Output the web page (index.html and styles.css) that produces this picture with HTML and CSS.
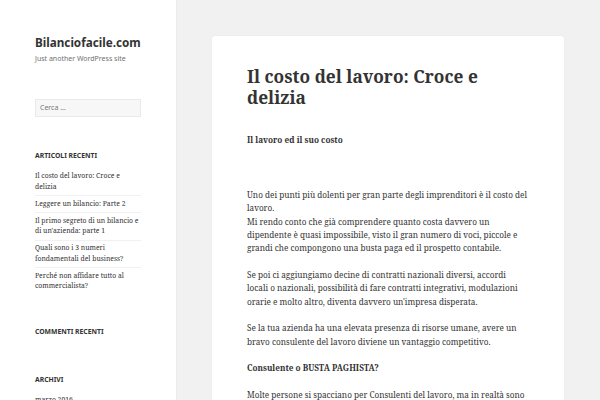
FILE: index.html
```html
<!DOCTYPE html>
<html lang="it">
<head>
<meta charset="utf-8">
<title>Bilanciofacile.com</title>
<link rel="stylesheet" href="styles.css">
</head>
<body>
<aside class="sidebar">
  <header class="site-header">
    <p class="site-title">Bilanciofacile.com</p>
    <p class="site-description">Just another WordPress site</p>
  </header>
  <form class="search">
    <input class="search-field" type="search" placeholder="Cerca …">
  </form>
  <section class="widget">
    <h2 class="widget-title">Articoli recenti</h2>
    <ul class="widget-list">
      <li>Il costo del lavoro: Croce e delizia</li>
      <li>Leggere un bilancio: Parte 2</li>
      <li>Il primo segreto di un bilancio e di un'azienda: parte 1</li>
      <li>Quali sono i 3 numeri fondamentali del business?</li>
      <li>Perché non affidare tutto al commercialista?</li>
    </ul>
  </section>
  <section class="widget widget-empty">
    <h2 class="widget-title">Commenti recenti</h2>
  </section>
  <section class="widget">
    <h2 class="widget-title">Archivi</h2>
    <ul class="widget-list">
      <li>marzo 2016</li>
    </ul>
  </section>
</aside>
<main class="main">
  <article class="card">
    <h1 class="entry-title">Il costo del lavoro: Croce e delizia</h1>
    <div class="entry-content">
      <p><strong>Il lavoro ed il suo costo</strong></p>
      <p class="spacer">&nbsp;</p>
      <p>Uno dei punti più dolenti per gran parte degli imprenditori è il costo del lavoro.<br>Mi rendo conto che già comprendere quanto costa davvero un dipendente è quasi impossibile, visto il gran numero di voci, piccole e grandi che compongono una busta paga ed il prospetto contabile.</p>
      <p>Se poi ci aggiungiamo decine di contratti nazionali diversi, accordi locali o nazionali, possibilità di fare contratti integrativi, modulazioni orarie e molto altro, diventa davvero un'impresa disperata.</p>
      <p>Se la tua azienda ha una elevata presenza di risorse umane, avere un bravo consulente del lavoro diviene un vantaggio competitivo.</p>
      <p><strong>Consulente o BUSTA PAGHISTA?</strong></p>
      <p>Molte persone si spacciano per Consulenti del lavoro, ma in realtà sono semplici elaboratori di buste paga.</p>
    </div>
  </article>
</main>
</body>
</html>
```
FILE: styles.css
```css
html, body {
  margin: 0;
  padding: 0;
  height: 400px;
  overflow: hidden;
}
body {
  background: #f1f1f1;
  color: #333;
  display: flex;
  align-items: flex-start;
  font-family: "Noto Serif", "DejaVu Serif", serif;
}
.sidebar {
  width: 106px;
  flex: none;
  min-height: 400px;
  background: #fff;
  padding: 34px 35px 0;
  box-shadow: 0 0 1px rgba(0,0,0,0.15);
}
.site-title {
  margin: 0;
  font-family: "Noto Sans", sans-serif;
  font-weight: 700;
  font-size: 11.7px;
  line-height: 16px;
  color: #333;
}
.site-description {
  margin: 4px 0 0;
  font-family: "Noto Sans", sans-serif;
  font-size: 7px;
  line-height: 10px;
  color: #707070;
}
.search {
  margin-top: 29px;
}
.search-field {
  box-sizing: border-box;
  width: 106px;
  height: 18px;
  margin: 0;
  padding: 0 4px;
  border: 1px solid #eaeaea;
  background: #f7f7f7;
  font-family: "Noto Sans", sans-serif;
  font-size: 7px;
  color: #707070;
  outline: none;
  border-radius: 0;
  -webkit-appearance: none;
}
.search-field::placeholder {
  color: #777;
}
.widget {
  margin-top: 34px;
}
.widget-title {
  margin: 0;
  font-family: "Noto Sans", sans-serif;
  font-weight: 700;
  font-size: 6.8px;
  letter-spacing: 0;
  text-transform: uppercase;
  line-height: 10px;
  color: #333;
}
.widget-list {
  list-style: none;
  margin: 8px 0 0;
  padding: 0;
  font-size: 6.8px;
  line-height: 10.7px;
}
.widget-list li {
  padding: 2.6px 0;
  border-top: 1px solid #f1f1f1;
}
.widget-list li:first-child {
  border-top: 0;
}
.widget + .widget {
  margin-top: 32px;
}
.widget-empty {
  padding-bottom: 6px;
}
.main {
  flex: 1;
  padding: 36px 36px 0;
}
.card {
  background: #fff;
  min-height: 400px;
  padding: 30px 35px 0;
  border-radius: 2px;
  box-shadow: 0 0 1px rgba(0,0,0,0.15);
}
.entry-title {
  margin: 0;
  font-size: 17.3px;
  line-height: 21px;
  font-weight: 700;
  color: #333;
}
.entry-content {
  margin-top: 25px;
  font-size: 8.2px;
  line-height: 13.33px;
}
.entry-content p {
  margin: 0 0 13.33px;
}
.entry-content .spacer {
  margin-bottom: 15px;
}
```
